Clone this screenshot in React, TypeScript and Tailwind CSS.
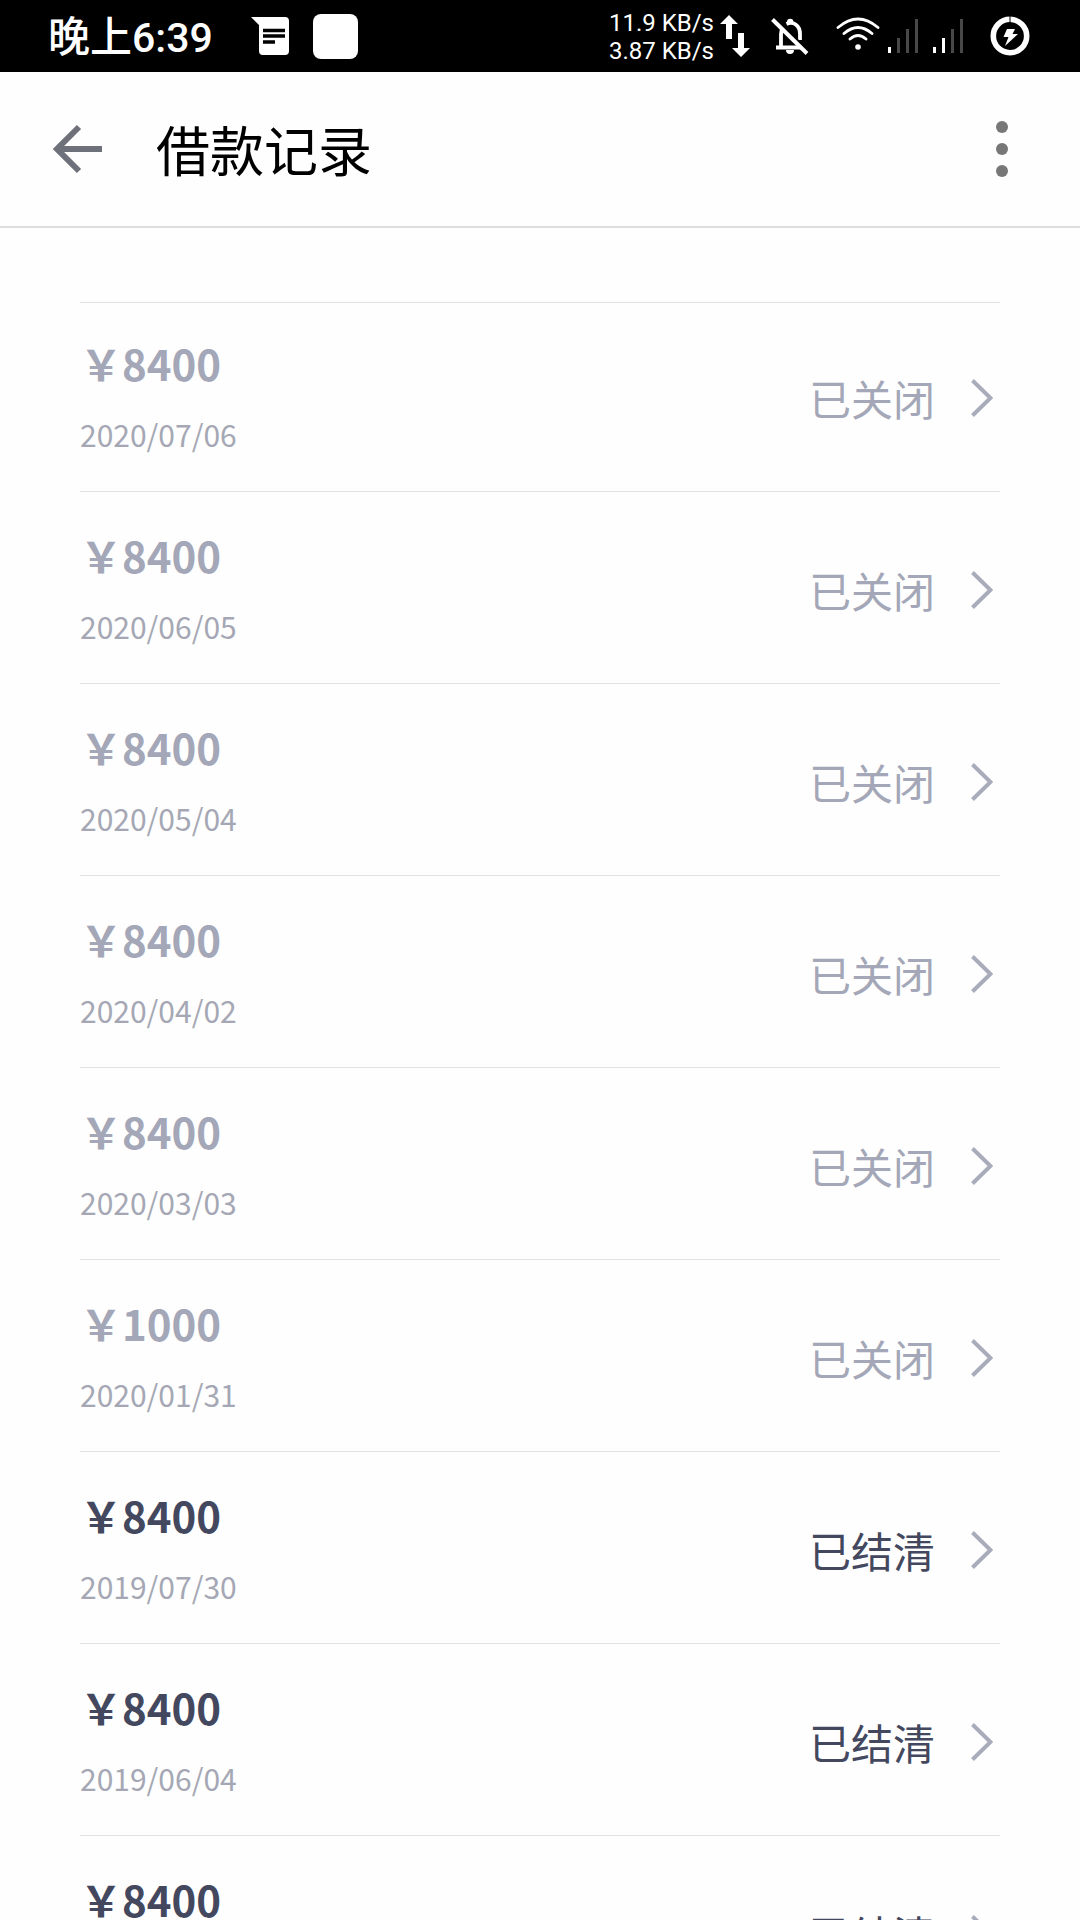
import React from "react";

type LoanRecord = {
  amount: string;
  date: string;
  state: "closed" | "settled";
};

const records: LoanRecord[] = [
  { amount: "8400", date: "2020/07/06", state: "closed" },
  { amount: "8400", date: "2020/06/05", state: "closed" },
  { amount: "8400", date: "2020/05/04", state: "closed" },
  { amount: "8400", date: "2020/04/02", state: "closed" },
  { amount: "8400", date: "2020/03/03", state: "closed" },
  { amount: "1000", date: "2020/01/31", state: "closed" },
  { amount: "8400", date: "2019/07/30", state: "settled" },
  { amount: "8400", date: "2019/06/04", state: "settled" },
  { amount: "8400", date: "", state: "settled" },
];

function MessageIcon() {
  return (
    <svg viewBox="0 0 38 38" className="size-[38px]" aria-hidden="true">
      <path d="M0 0H34a4 4 0 0 1 4 4V34a4 4 0 0 1-4 4H12a4 4 0 0 1-4-4V8Z" fill="#fff" />
      <path d="M12 13.5H34M12 19H34M12 25H24" stroke="#000" strokeWidth="3.4" />
    </svg>
  );
}

function TransferIcon() {
  return (
    <svg viewBox="0 0 30 44" className="h-11 w-[30px]" aria-hidden="true">
      <path d="M9 1 18 10H12V25H6V10H0Z" fill="#fff" />
      <path d="M21 43 12 34H18V19H24V34H30Z" fill="#fff" />
    </svg>
  );
}

function MutedBellIcon() {
  return (
    <svg viewBox="0 0 38 38" className="size-[38px]" fill="none" stroke="#fff" aria-hidden="true">
      <path d="M5 30.500H31M10 30V17C10 14 11 12 12 10.500M15.500 7C22 4 29 8 29 17V23" strokeWidth="3.800" />
      <path d="M16 5A3.200 3.200 0 0 1 22.400 5V6H16ZM15 33H23A4 4 0 0 1 15 33Z" fill="#fff" stroke="none" />
      <path d="M3.500 1 38 35" stroke="#000" strokeWidth="3" />
      <path d="M1.500 2.500 36 36.500" strokeWidth="4" />
    </svg>
  );
}

function WifiIcon() {
  return (
    <svg viewBox="0 0 44 34" className="h-[34px] w-11" fill="none" stroke="#fff" strokeWidth="2.800" strokeLinecap="round" aria-hidden="true">
      <path d="M2 10.500Q22-6.500 42 10.500M8 16.500Q22 4.500 36 16.500M14 22Q22 15 30 22" />
      <circle cx="22" cy="30" r="2.800" fill="#fff" stroke="none" />
    </svg>
  );
}

function SignalIcon({ level }: { level: number }) {
  const bars = [6, 15, 24, 34];
  return (
    <svg viewBox="0 0 32 36" className="h-9 w-8" aria-hidden="true">
      {bars.map((height, i) => (
        <rect key={height} x={1 + i * 9} y={35 - height} width="3" height={height} fill={i < level ? "#fff" : "#484848"} />
      ))}
    </svg>
  );
}

function ChargingIcon() {
  return (
    <svg viewBox="0 0 40 40" className="size-10" aria-hidden="true">
      <circle cx="20" cy="20" r="16.700" fill="none" stroke="#fff" strokeWidth="5.600" />
      <path d="M20 0V7" stroke="#000" strokeWidth="1" />
      <path d="M17 13H25L22.500 18H28L15 30L18.500 21H13.500Z" fill="#fff" />
    </svg>
  );
}

function StatusBar() {
  return (
    <div className="flex h-[72px] shrink-0 items-center justify-between bg-black pr-[50px] pl-12 text-white">
      <div className="flex items-center">
        <div className="flex items-baseline leading-[48px] font-medium">
          <span className="text-[42px]">晚上</span>
          <span className="font-[Roboto,sans-serif] text-[41px]">6:39</span>
        </div>
        <div className="ml-[38px] flex items-center gap-6">
          <MessageIcon />
          <span className="size-[45px] rounded-lg bg-white" />
        </div>
      </div>
      <div className="flex items-center">
        <div className="mr-1.5 flex flex-col pt-0.5 text-right font-[Roboto,sans-serif] text-2xl leading-7">
          <span>11.9 KB/s</span>
          <span>3.87 KB/s</span>
        </div>
        <TransferIcon />
        <div className="ml-[21px]">
          <MutedBellIcon />
        </div>
        <div className="ml-[27px] pb-1">
          <WifiIcon />
        </div>
        <div className="ml-[7px] flex gap-[13px]">
          <SignalIcon level={1} />
          <SignalIcon level={2} />
        </div>
        <div className="ml-[26px]">
          <ChargingIcon />
        </div>
      </div>
    </div>
  );
}

function Header() {
  return (
    <header className="flex h-[156px] shrink-0 items-center border-b-2 border-[#dedede] pr-[66px] pl-[53px]">
      <button type="button" aria-label="返回">
        <svg viewBox="0 0 50 50" className="size-[50px]" fill="none" stroke="#6e717a" strokeWidth="6" aria-hidden="true">
          <path d="M49 25H6M26 3 4 25 26 47" />
        </svg>
      </button>
      <h1 className="ml-[53px] flex-1 text-[54px] leading-[80px] text-black">借款记录</h1>
      <button type="button" aria-label="更多" className="flex w-6 flex-col items-center gap-2.5">
        <span className="size-3 rounded-full bg-[#777]" />
        <span className="size-3 rounded-full bg-[#777]" />
        <span className="size-3 rounded-full bg-[#777]" />
      </button>
    </header>
  );
}

function RecordRow({ record }: { record: LoanRecord }) {
  const closed = record.state === "closed";
  return (
    <li className="group border-b border-[#e2e2e4]">
      <button type="button" className="flex w-full items-end pt-8 text-left group-first:pt-[29px]">
        <span className="flex flex-1 flex-col gap-[18px] pb-[35px]">
          <span className={closed ? "text-[42px] leading-[62px] font-bold text-[#a3a7b7]" : "text-[42px] leading-[62px] font-bold text-[#43485e]"}>
            ￥{record.amount}
          </span>
          <span className="h-11 text-[30px] leading-[44px] text-[#a5a8b4]">{record.date}</span>
        </span>
        <span className="flex items-center pb-[63px]">
          <span className={closed ? "text-[42px] leading-[60px] text-[#a3a7b7]" : "text-[42px] leading-[60px] text-[#43485e]"}>
            {closed ? "已关闭" : "已结清"}
          </span>
          <svg viewBox="0 0 22 38" className="mr-[7px] ml-9 h-[38px] w-[22px]" fill="none" stroke="#a8acba" strokeWidth="4" aria-hidden="true">
            <path d="M1.500 1.500 19.500 19 1.500 36.500" />
          </svg>
        </span>
      </button>
    </li>
  );
}

export default function App() {
  return (
    <div className="flex h-screen flex-col bg-[#fefefe] font-['Noto_Sans_CJK_SC',sans-serif]">
      <StatusBar />
      <Header />
      <main className="min-h-0 flex-1 overflow-y-auto px-20 pt-[74px] [scrollbar-width:none]">
        <ul className="border-t border-[#e2e2e4]">
          {records.map((record, i) => (
            <RecordRow key={i} record={record} />
          ))}
        </ul>
      </main>
    </div>
  );
}
